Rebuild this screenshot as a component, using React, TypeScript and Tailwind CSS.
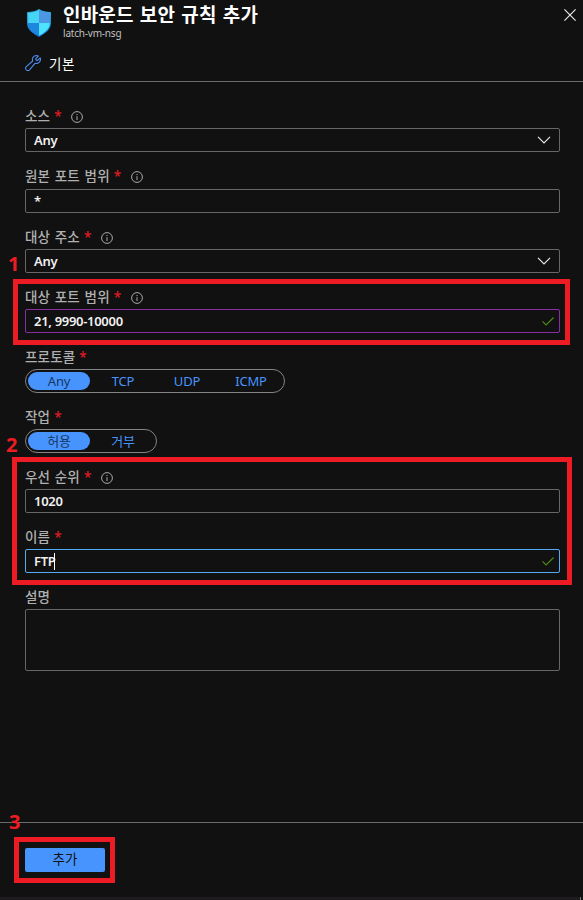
import { useState, type ReactNode } from 'react';
import clsx from 'clsx';

function InfoIcon() {
  return (
    <svg viewBox="0 0 12 12" className="mt-px ml-[9.500px] size-3 text-[#a8a8a8]" fill="none" stroke="currentColor">
      <circle cx="6" cy="6" r="5.4" />
      <path d="M6 5.2V9M6 3v1.1" />
    </svg>
  );
}

function ShieldIcon() {
  return (
    <svg viewBox="0 0 24 28" className="h-7 w-6">
      <defs>
        <clipPath id="shield">
          <path d="M12 0C8.5 2.4 4.6 2.8.8 3a.8.8 0 0 0-.8.8V14c0 7 6.5 11 12 14 5.500-3 12-7 12-14V3.800a.8.8 0 0 0-.8-.8C19.400 2.800 15.500 2.400 12 0Z" />
        </clipPath>
        <linearGradient id="shield-edge" x1="0" y1="0" x2="0" y2="1">
          <stop offset="0" stopColor="#2fb4dd" />
          <stop offset="1" stopColor="#0f6fd0" />
        </linearGradient>
      </defs>
      <g clipPath="url(#shield)">
        <path d="M0 0h24v28H0z" fill="url(#shield-edge)" />
        <path d="M12 1.200C8.500 3.400 5 3.700 1.200 4v10H12Z" fill="#45d5f5" />
        <path d="M12 1.200c3.500 2.200 7 2.500 10.800 2.800v10H12Z" fill="#4c96e4" />
        <path d="M1.200 14H12v12.800C6.500 24 1.200 20 1.200 14Z" fill="#1d87e0" />
        <path d="M22.800 14H12v12.800c5.500-2.800 10.800-6.800 10.800-12.800Z" fill="#4de3ff" />
      </g>
    </svg>
  );
}

function WrenchIcon() {
  return (
    <svg viewBox="0 0 16 16" className="-mt-px size-4" fill="none" stroke="#4c8ef0" strokeWidth="1.1" strokeLinejoin="round">
      <path d="M13.300 1.100 10.800 3.600l.3 1.500 1.500.3 2.600-2.500c.8 2.300-.4 4.900-2.900 5.500-.8.200-1.600.1-2.300-.1L4.500 14.800c-.8.800-2.200.9-3.200 0-1-1-.9-2.400 0-3.200L7.700 6C6.800 3.700 8 1.400 10.200.8c1.100-.3 2.200-.2 3.100.3Z" />
    </svg>
  );
}

function ChevronIcon() {
  return (
    <svg viewBox="0 0 14 8" className="mr-2 h-2 w-3.5" fill="none" stroke="#e8e8e8" strokeWidth="1.200">
      <path d="m1 .8 6 6 6-6" />
    </svg>
  );
}

function CheckIcon() {
  return (
    <svg viewBox="0 0 12 9" className="mr-[5px] h-[9px] w-3" fill="none" stroke="#4e8a12" strokeWidth="1.200">
      <path d="M.5 4.300 4.100 7.900 11.600.5" />
    </svg>
  );
}

interface FieldProps {
  label: string;
  required?: boolean;
  info?: boolean;
  loose?: boolean;
  children: ReactNode;
}

function Field({ label, required = true, info, loose, children }: FieldProps) {
  return (
    <div className={loose ? 'h-[61px]' : 'h-[60px]'}>
      <div
        className={clsx(
          'flex h-6 items-center text-[13.500px] leading-6 font-medium text-[#b0b0b0]',
          loose && 'mb-px',
        )}
      >
        <span className="-mt-px tracking-[0.150px] whitespace-nowrap [word-spacing:1px]">{label}</span>
        {required && <span className="ml-1 text-[#e01b24]">*</span>}
        {info && <InfoIcon />}
      </div>
      {children}
    </div>
  );
}

type Tone = 'default' | 'changed' | 'focused';

function Box({ value, tone = 'default', icon, caret }: { value: string; tone?: Tone; icon?: ReactNode; caret?: boolean }) {
  return (
    <div
      className={clsx(
        'flex h-6 items-center justify-between rounded-[2px] border pl-2 text-[13px] font-semibold tracking-[-0.300px] text-[#f0f0f0]',
        tone === 'default' && 'border-[#666]',
        tone === 'changed' && 'border-[#8a2da5]',
        tone === 'focused' && 'border-[#55aaf5]',
      )}
    >
      <span className="flex items-center">
        <span className="leading-5">{value}</span>
        {caret && <span className="-ml-[1.500px] h-[17px] w-px bg-white" />}
      </span>
      {icon}
    </div>
  );
}

function Toggle({ options }: { options: string[] }) {
  const [active, setActive] = useState(0);
  return (
    <div className="flex h-6 w-max items-center rounded-full border border-[#848484] px-px text-[13px] tracking-[-0.200px]">
      {options.map((option, i) => (
        <button
          key={option}
          onClick={() => setActive(i)}
          className={clsx(
            'mx-px h-[18px] w-[62px] rounded-full leading-[18px]',
            i === active ? 'bg-[#4894fe] text-[#16375f]' : 'text-[#4894fe]',
          )}
        >
          {option}
        </button>
      ))}
    </div>
  );
}

// Red frame plus step number laid over the form
function Callout({ frame, step, stepClass }: { frame: string; step: string; stepClass: string }) {
  return (
    <>
      <div className={clsx('pointer-events-none absolute border-[5px] border-[#ed1c24]', frame)} />
      <span className={clsx('absolute text-[20px] leading-5 font-bold text-[#ed1c24]', stepClass)}>{step}</span>
    </>
  );
}

export default function App() {
  return (
    <div className="relative flex h-[900px] w-[583px] flex-col overflow-hidden bg-[#111] font-['Noto_Sans','Noto_Sans_CJK_KR',sans-serif] text-white">
      <header className="h-[82px] border-b border-[#6b6b6b]">
        <div className="flex h-[46px] pl-[27px]">
          <div className="pt-[9px]">
            <ShieldIcon />
          </div>
          <div className="ml-3 flex-1">
            <h1 className="pt-[5px] text-[19px] leading-5 font-bold tracking-[0.200px] whitespace-nowrap [word-spacing:1px]">
              인바운드 보안 규칙 추가
            </h1>
            <p className="mt-[3px] text-[10px] leading-[11px] tracking-[-0.200px] text-[#c0c0c0]">latch-vm-nsg</p>
          </div>
          <button aria-label="닫기" className="mt-[9px] mr-[7px] size-3">
            <svg viewBox="0 0 12 12" className="size-3" stroke="#f0f0f0" strokeWidth="1.100">
              <path d="m.4.4 11.200 11.200M11.600.4.4 11.600" />
            </svg>
          </button>
        </div>
        <div className="flex h-[35px] items-center gap-2 pl-[25px] text-[13.500px]">
          <WrenchIcon />
          <span className="pt-px tracking-[0.500px]">기본</span>
        </div>
      </header>

      <main className="flex-1 pt-[22px] pr-[23px] pl-[25px]">
        <Field label="소스" info>
          <Box value="Any" icon={<ChevronIcon />} />
        </Field>
        <Field label="원본 포트 범위" info loose>
          <Box value="*" />
        </Field>
        <Field label="대상 주소" info>
          <Box value="Any" icon={<ChevronIcon />} />
        </Field>
        <Field label="대상 포트 범위" info>
          <Box value="21, 9990-10000" tone="changed" icon={<CheckIcon />} />
        </Field>
        <Field label="프로토콜">
          <Toggle options={['Any', 'TCP', 'UDP', 'ICMP']} />
        </Field>
        <Field label="작업">
          <Toggle options={['허용', '거부']} />
        </Field>
        <Field label="우선 순위" info>
          <Box value="1020" />
        </Field>
        <Field label="이름">
          <Box value="FTP" tone="focused" caret icon={<CheckIcon />} />
        </Field>
        <Field label="설명" required={false}>
          <div className="h-[62px] rounded-[2px] border border-[#666]" />
        </Field>
      </main>

      <footer className="h-[78px] border-t border-[#6b6b6b] pt-[25px] pl-[25px]">
        <button className="block h-6 w-20 rounded-[2px] bg-[#4894fe] pb-0.5 text-[13.500px] leading-5 text-[#111]">추가</button>
        <div className="mt-[25px] -ml-[25px] h-[3px] w-[581px] border-r border-[#777] bg-[#1d1b1d]" />
      </footer>

      <Callout frame="top-[279px] left-[13px] h-[66px] w-[557px]" step="1" stepClass="top-[254px] left-2" />
      <Callout frame="top-[457px] left-[12px] h-[128px] w-[560px]" step="2" stepClass="top-[435px] left-1.5" />
      <Callout frame="top-[837px] left-[14px] h-[46px] w-[101px]" step="3" stepClass="top-[812px] left-[9px]" />
    </div>
  );
}
